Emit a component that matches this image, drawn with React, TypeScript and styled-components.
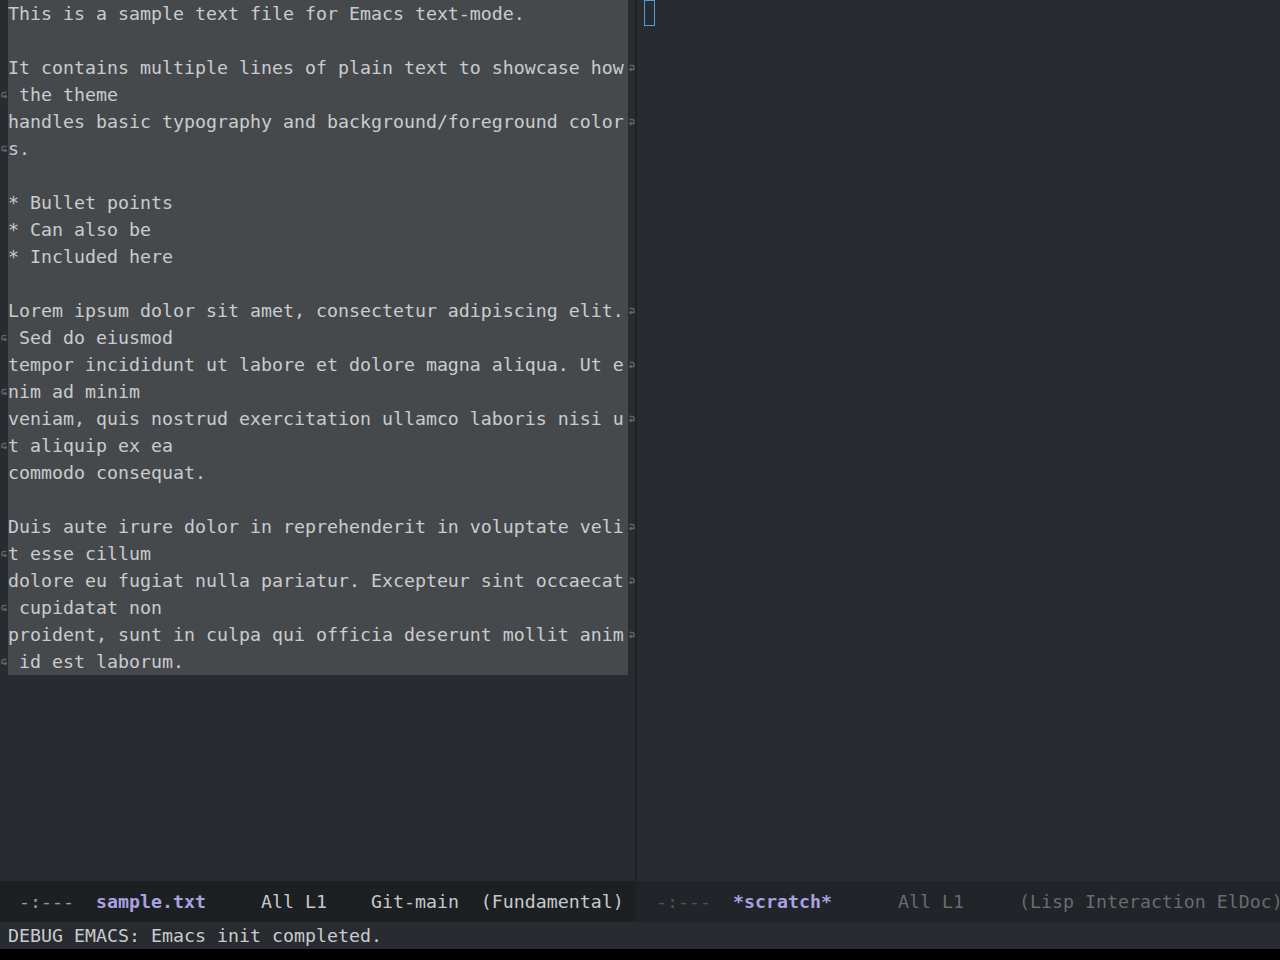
import React from "react";
import styled, { createGlobalStyle } from "styled-components";

const GlobalStyle = createGlobalStyle`
  html, body {
    margin: 0;
    padding: 0;
    background: #000000;
  }
  body {
    width: 1280px;
    height: 960px;
    overflow: hidden;
  }
`;

const MONO = `"DejaVu Sans Mono", "Liberation Mono", monospace`;

const BG = "#282b2f";
const REGION = "#46494c";
const FG = "#c9ccce";

type Line = { text: string; wrapIn?: boolean; wrapOut?: boolean };

const lines: Line[] = [
  { text: "This is a sample text file for Emacs text-mode." },
  { text: "" },
  { text: "It contains multiple lines of plain text to showcase how", wrapOut: true },
  { text: " the theme", wrapIn: true },
  { text: "handles basic typography and background/foreground color", wrapOut: true },
  { text: "s.", wrapIn: true },
  { text: "" },
  { text: "* Bullet points" },
  { text: "* Can also be" },
  { text: "* Included here" },
  { text: "" },
  { text: "Lorem ipsum dolor sit amet, consectetur adipiscing elit.", wrapOut: true },
  { text: " Sed do eiusmod", wrapIn: true },
  { text: "tempor incididunt ut labore et dolore magna aliqua. Ut e", wrapOut: true },
  { text: "nim ad minim", wrapIn: true },
  { text: "veniam, quis nostrud exercitation ullamco laboris nisi u", wrapOut: true },
  { text: "t aliquip ex ea", wrapIn: true },
  { text: "commodo consequat." },
  { text: "" },
  { text: "Duis aute irure dolor in reprehenderit in voluptate veli", wrapOut: true },
  { text: "t esse cillum", wrapIn: true },
  { text: "dolore eu fugiat nulla pariatur. Excepteur sint occaecat", wrapOut: true },
  { text: " cupidatat non", wrapIn: true },
  { text: "proident, sunt in culpa qui officia deserunt mollit anim", wrapOut: true },
  { text: " id est laborum.", wrapIn: true },
];

const Frame = styled.div`
  width: 1280px;
  height: 960px;
  display: flex;
  flex-direction: column;
  background: #000000;
  font-family: ${MONO};
  font-size: 18.27px;
  line-height: 27px;
  color: ${FG};
`;

const WindowsRow = styled.div`
  height: 922px;
  display: flex;
`;

const Window = styled.div<{ $width: number }>`
  width: ${(p) => p.$width}px;
  flex-shrink: 0;
  display: flex;
  flex-direction: column;
  background: ${BG};
  overflow: hidden;
`;

const Divider = styled.div`
  width: 2px;
  flex-shrink: 0;
  background: #1f2225;
`;

const Body = styled.div`
  flex: 1;
  display: flex;
  flex-direction: column;
`;

const Row = styled.div`
  height: 27px;
  display: flex;
`;

const Fringe = styled.div<{ $width: number }>`
  width: ${(p) => p.$width}px;
  flex-shrink: 0;
  display: flex;
  align-items: center;
  justify-content: center;
`;

const TextCell = styled.div<{ $region?: boolean }>`
  width: 620px;
  flex-shrink: 0;
  white-space: pre;
  overflow: hidden;
  background: ${(p) => (p.$region ? REGION : "transparent")};
`;

const Cursor = styled.span`
  display: inline-block;
  width: 11px;
  height: 26px;
  box-sizing: border-box;
  border: 1.5px solid #4f9fd6;
  vertical-align: top;
`;

const ModeLine = styled.div<{ $active?: boolean }>`
  height: 41px;
  flex-shrink: 0;
  display: flex;
  align-items: center;
  padding-left: 8px;
  white-space: pre;
  overflow: hidden;
  background: ${(p) => (p.$active ? "#1d2023" : "#212428")};
`;

const Seg = styled.span<{ $tone: "bright" | "mid" | "dim" | "faint" | "buffer" }>`
  color: ${(p) =>
    ({
      bright: "#c6c9cc",
      mid: "#9a9ea2",
      dim: "#676c71",
      faint: "#4f5459",
      buffer: "#a9a1e1",
    })[p.$tone]};
  font-weight: ${(p) => (p.$tone === "buffer" ? 700 : 400)};
`;

const Minibuffer = styled.div`
  height: 27px;
  flex-shrink: 0;
  padding-left: 8px;
  background: ${BG};
  white-space: pre;
  color: ${FG};
`;

const BottomEdge = styled.div`
  flex: 1;
  background: #000000;
`;

const WrapArrow = ({ dir }: { dir: "in" | "out" }) => (
  <svg width="7" height="8" viewBox="0 0 7 8" style={{ display: "block" }}>
    {dir === "out" ? (
      <path
        d="M1.5 1.5 H4.5 Q6 1.5 6 3 V5.5 H2 M3.4 4 L1.6 5.5 L3.4 7"
        fill="none"
        stroke="#5e6367"
        strokeWidth="1.4"
      />
    ) : (
      <path
        d="M5.5 1.5 H2.5 Q1 1.5 1 3 V5.5 H5 M3.6 4 L5.4 5.5 L3.6 7"
        fill="none"
        stroke="#5e6367"
        strokeWidth="1.4"
      />
    )}
  </svg>
);

const App = () => (
  <>
    <GlobalStyle />
    <Frame>
      <WindowsRow>
        <Window $width={635}>
          <Body>
            {lines.map((l, i) => (
              <Row key={i}>
                <Fringe $width={8}>{l.wrapIn && <WrapArrow dir="in" />}</Fringe>
                <TextCell $region>{l.text}</TextCell>
                <Fringe $width={7}>{l.wrapOut && <WrapArrow dir="out" />}</Fringe>
              </Row>
            ))}
          </Body>
          <ModeLine $active>
            <Seg $tone="mid"> -:---  </Seg>
            <Seg $tone="buffer">sample.txt</Seg>
            <Seg $tone="bright">     All L1    Git-main  (Fundamental)</Seg>
          </ModeLine>
        </Window>
        <Divider />
        <Window $width={643}>
          <Body>
            <Row>
              <Fringe $width={7} />
              <TextCell>
                <Cursor />
              </TextCell>
            </Row>
          </Body>
          <ModeLine>
            <Seg $tone="faint"> -:---  </Seg>
            <Seg $tone="buffer">*scratch*</Seg>
            <Seg $tone="dim">      All L1     (Lisp Interaction ElDoc)</Seg>
          </ModeLine>
        </Window>
      </WindowsRow>
      <Minibuffer>DEBUG EMACS: Emacs init completed.</Minibuffer>
      <BottomEdge />
    </Frame>
  </>
);

export default App;
